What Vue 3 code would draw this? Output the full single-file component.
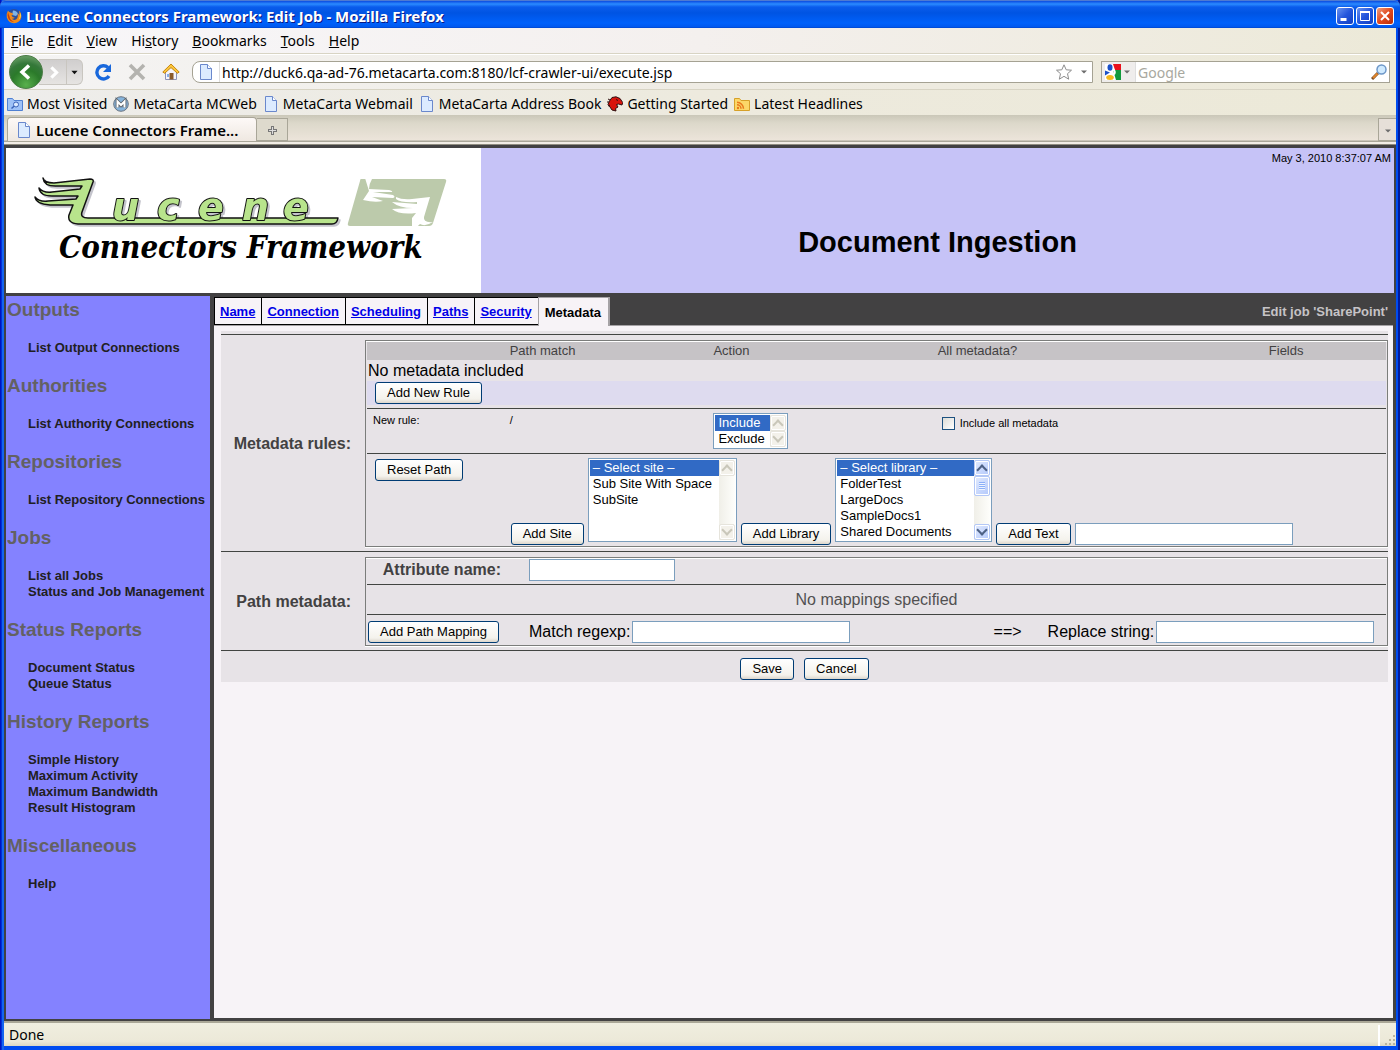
<template>
    <div class="window">
        <header class="title-bar">
            <svg class="icon" viewBox="0 0 16 16" aria-hidden="true">
                <circle cx="8" cy="8" r="7" fill="#2a4f9c" />
                <path d="M7 2.5q4 0 5 3.5l-2 2-4-1z" fill="#7fb4e8" />
                <path d="M2 2.500Q0 6 .8 9.500 2.500 15 8 15.300q6-.3 7.300-6Q15.600 5 13 2.600q1 3 .4 5-.8-2-2-2.600 1.200 4-1 6.200-2.500 1.600-4.600-.4 1.800.2 3-1-2.800-.4-3.300-2.600.8-.8 2-.7Q6.500 4.800 4.200 4.600 2.600 4 2 2.500z" fill="#f08a1c" />
                <path d="M2 4q-1 3 .2 6 1.600 4 6 4.200Q4 12 3.500 8.500 2.500 6 2 4z" fill="#c8400c" />
                <path d="M13.600 4.200q1.200 4-1 7.500 2-1 2.400-4 0-2-1.400-3.500z" fill="#fbd44a" />
            </svg>
            <h1>Lucene Connectors Framework: Edit Job - Mozilla Firefox</h1>
            <div class="window-buttons">
                <button type="button" aria-label="Minimize"><svg viewBox="0 0 14 14"><path d="M2.500 10.500h6" stroke="#fff" stroke-width="3" /></svg></button>
                <button type="button" aria-label="Maximize"><svg viewBox="0 0 14 14"><path d="M2.500 3v8.500h9V3z" stroke="#fff" fill="none" /><path d="M2 3h10" stroke="#fff" stroke-width="2" /></svg></button>
                <button type="button" class="close" aria-label="Close"><svg viewBox="0 0 14 14"><path d="M3 3l8 8M11 3l-8 8" stroke="#fff" stroke-width="2" /></svg></button>
            </div>
        </header>

        <nav class="menu-bar">
            <button v-for="item in menus" :key="item.key + item.post" type="button">{{ item.pre }}<u>{{ item.key }}</u>{{ item.post }}</button>
        </nav>

        <div class="toolbar">
            <div class="history">
                <button type="button" class="back" aria-label="Back"><svg viewBox="0 0 32 32"><path d="M19 9.500l-7 6.500 7 6.500" stroke="#fff" stroke-width="3.500" fill="none" /></svg></button>
                <button type="button" class="forward" aria-label="Forward"><svg viewBox="0 0 22 22"><path d="M8 6l5 5-5 5" stroke="#fff" stroke-width="3" fill="none" /></svg></button>
                <button type="button" class="recent" aria-label="Recent pages"><svg viewBox="0 0 8 8"><path d="M0.500 2h7L4 6z" fill="#111" /></svg></button>
            </div>
            <div class="tools">
                <button type="button" aria-label="Reload"><svg viewBox="0 0 18 18"><path d="M14 4.500A6.600 6.600 0 1 0 15 13" stroke="#1968dc" stroke-width="3.400" fill="none" /><path d="M9 9h8V1z" fill="#1968dc" /></svg></button>
                <button type="button" aria-label="Stop"><svg viewBox="0 0 18 18"><path d="M2 2l14 14M16 2L2 16" stroke="#b4b3af" stroke-width="3.600" /></svg></button>
                <button type="button" aria-label="Home">
                    <svg viewBox="0 0 18 18">
                        <path d="M3.500 8.500v8h11v-8L9 3.500z" fill="#f6f5fb" stroke="#8d93b8" />
                        <path d="M7.500 10h4v6.500h-4z" fill="#8a5a2a" /><path d="M5 11h2v3H5z" fill="#86aee8" />
                        <path d="M9 1L.8 9l1.800 1.300L9 4.600l6.400 5.700L17.200 9z" fill="#fbc63a" stroke="#c78612" />
                    </svg>
                </button>
            </div>
            <div class="field address">
                <span class="site-icon">
                    <svg class="icon" viewBox="0 0 16 16" aria-hidden="true"><path :d="pageShape" fill="#dcebff" stroke="#6a88cc" /><path d="M9.500 .5v4h4" fill="#fff" stroke="#6a88cc" /></svg>
                </span>
                <input type="text" aria-label="Location" v-model="url">
                <button type="button" aria-label="Bookmark this page"><svg class="icon" viewBox="0 0 16 16"><path d="M8 .8l2.200 5 5.300.4-4 3.500 1.200 5.500L8 12.300l-4.700 2.900 1.200-5.500-4-3.500 5.300-.4z" fill="#fff" stroke="#8d8d8d" /></svg></button>
                <button type="button" class="drop" aria-label="Show history"><svg viewBox="0 0 8 8"><path d="M1 2.500h6L4 5.500z" fill="#6d6d6d" /></svg></button>
            </div>
            <div class="field search">
                <button type="button" class="engine" aria-label="Search engine">
                    <svg class="icon" viewBox="0 0 16 16">
                        <path d="M0 0h16v16H0z" fill="#fff" /><path d="M8 0h8v6H10z" fill="#e8101c" /><path d="M8 6h8v10h-5z" fill="#109a3c" />
                        <ellipse cx="5" cy="3.500" rx="2.500" ry="3.300" fill="#1a50c8" /><path d="M0 6.500l5 2-5 3z" fill="#1a50c8" /><ellipse cx="5" cy="13.500" rx="3.800" ry="2.500" fill="#f5b81c" />
                        <path d="M8 5.500q3 2 1 5" stroke="#fff" stroke-width="2" fill="none" />
                    </svg>
                    <svg class="caret" viewBox="0 0 8 8"><path d="M1 2.500h6L4 5.500z" fill="#6d6d6d" /></svg>
                </button>
                <input type="text" aria-label="Search" placeholder="Google">
                <button type="button" aria-label="Go"><svg class="icon" viewBox="0 0 16 16"><path d="M1 15l6-6" stroke="#7a4a22" stroke-width="3" /><path d="M2 14l4.500-4.500" stroke="#e0862c" stroke-width="2" /><circle cx="10.500" cy="5.500" r="4.500" fill="#cfeaff" stroke="#6d97c8" stroke-width="1.500" /></svg></button>
            </div>
        </div>

        <nav class="bookmarks">
            <a v-for="mark in bookmarks" :key="mark.label" href="#">
                <svg v-if="mark.icon === 'folder'" class="icon" viewBox="0 0 16 16"><path d="M.5 14.500v-12h5l1.500 2h8.500v10z" fill="#9fc2f7" stroke="#4f80d2" /><circle cx="9" cy="8.500" r="2.500" fill="#dcebff" stroke="#3a62b8" /><path d="M4.500 12.500L7 10.300" stroke="#3a62b8" stroke-width="1.500" /></svg>
                <svg v-else-if="mark.icon === 'globe'" class="icon" viewBox="0 0 16 16"><circle cx="8" cy="8" r="7.300" fill="#86b4dc" stroke="#6a7480" /><path d="M4.500 11.500V5.500L8 9l3.500-3.500v6" fill="none" stroke="#596068" stroke-width="3.800" /><path d="M4.500 11.500V5.500L8 9l3.500-3.500v6" fill="none" stroke="#fff" stroke-width="2" /></svg>
                <svg v-else-if="mark.icon === 'page'" class="icon" viewBox="0 0 16 16"><path :d="pageShape" fill="#dcebff" stroke="#6a88cc" /><path d="M9.500 .5v4h4" fill="#fff" stroke="#6a88cc" /></svg>
                <svg v-else-if="mark.icon === 'dino'" class="icon" viewBox="0 0 16 16"><path d="M5 1.500L9 .8l4 1.700 2.700 4-.7 2.500-3.500-1-2 .5L11 11l-2.500 1.500.5 2.500-4-1L3 11 1 8.500 2.500 5z" fill="#d8130c" stroke="#301010" /><path d="M1 3l2 1M0 6h2M1 10l2-1M9 3.500l2 1" stroke="#301010" fill="none" /></svg>
                <svg v-else class="icon" viewBox="0 0 16 16"><path d="M.5 14.500v-12h5l1.500 2h8.500v10z" fill="#fbd768" stroke="#d6a028" /><circle cx="4" cy="12" r="1.200" fill="#e8791c" /><path d="M3 8.800a4 4 0 0 1 4 4M3 6.300a6.500 6.500 0 0 1 6.500 6.500" stroke="#e8791c" stroke-width="1.500" fill="none" /></svg>
                {{ mark.label }}
            </a>
        </nav>

        <div class="tab-strip">
            <button type="button" class="page-tab">
                <svg class="icon" viewBox="0 0 16 16"><path :d="pageShape" fill="#dcebff" stroke="#6a88cc" /><path d="M9.500 .5v4h4" fill="#fff" stroke="#6a88cc" /></svg>
                Lucene Connectors Frame...
            </button>
            <button type="button" class="new-tab" aria-label="New tab"><svg viewBox="0 0 9 9"><path d="M4.500 0v9M0 4.500h9" stroke="#777" stroke-width="3" /><path d="M4.500 1v7M1 4.500h7" stroke="#ddd" /></svg></button>
            <button type="button" class="all-tabs" aria-label="List all tabs"><svg viewBox="0 0 8 8"><path d="M1 2.500h6L4 5.500z" fill="#6d6d6d" /></svg></button>
        </div>

        <div class="page">
            <div class="banner">
                <div class="logo">
                    <svg viewBox="0 0 475 145" role="img" aria-label="Lucene Connectors Framework">
                        <g class="wordmark">
                            <path d="M37 30Q38 35 48 35L84 31Q88 31 87 34L76 64Q74 70 82 70H332Q331 76 326 76H72Q61 75 63 67L67 57H44Q30 56 29 49 33 54 42 53L70 51 72 48H46Q34 48 33 40 37 45 46 44L74 41 76 38H52Q38 39 37 30z" />
                            <text y="72"><tspan x="66" class="cap">L</tspan><tspan x="106 151 192 236 277">ucene</tspan></text>
                        </g>
                        <path d="M355 31h83q3 0 2 3l-13 41q-1 3-4 3h-79q-3 0-2-3l12-42q0-2 1-2z" fill="#bccaab" />
                        <path d="M359 30l7 1q-3 5-3 10l20 1q4 1 3 2h-19l20 3q3 2 0 3l-21-1 11 4q-8 2-20-1l6-9z" fill="#fff" />
                        <path d="M390 49q6 3 16 2l18-2-6 20q-1 6 9 5-8 5-13 2-4 5-8 2v-8l4-5q-17 2-24-4l21-1q-14 0-21-6l25 2v-2q-16 1-21-3z" fill="#fff" />
                        <text class="tagline" x="53" y="110">Connectors Framework</text>
                    </svg>
                </div>
                <div class="heading">
                    <p class="date">May 3, 2010 8:37:07 AM</p>
                    <h2>Document Ingestion</h2>
                </div>
            </div>

            <div class="body">
                <nav class="sidebar">
                    <section v-for="group in groups" :key="group.title">
                        <h3>{{ group.title }}</h3>
                        <ul>
                            <li v-for="link in group.links" :key="link"><a href="#">{{ link }}</a></li>
                        </ul>
                    </section>
                </nav>

                <main>
                    <div class="tabs">
                        <a v-for="tab in tabs" :key="tab" href="#" :class="{ active: tab === 'Metadata' }">{{ tab }}</a>
                        <span class="job-name">Edit job 'SharePoint'</span>
                    </div>

                    <form @submit.prevent>
                        <div class="form-row">
                            <div class="row-label">Metadata rules:</div>
                            <div class="box">
                                <table class="rules">
                                    <thead>
                                        <tr><th></th><th>Path match</th><th>Action</th><th>All metadata?</th><th>Fields</th></tr>
                                    </thead>
                                    <tbody>
                                        <tr class="empty"><td colspan="5">No metadata included</td></tr>
                                        <tr><td colspan="5" class="add-cell"><div class="add-rule"><button type="button" class="btn">Add New Rule</button></div></td></tr>
                                        <tr class="new-rule">
                                            <td class="indent">New rule:</td>
                                            <td>/</td>
                                            <td>
                                                <div class="list-box action">
                                                    <select size="2" aria-label="Action" v-model="action">
                                                        <option>Include</option>
                                                        <option>Exclude</option>
                                                    </select>
                                                    <span class="scroller off"><i class="arrow up"></i><i class="arrow down"></i></span>
                                                </div>
                                            </td>
                                            <td><label class="check"><input type="checkbox"> Include all metadata</label></td>
                                            <td></td>
                                        </tr>
                                        <tr class="path-row">
                                            <td class="reset"><button type="button" class="btn">Reset Path</button></td>
                                            <td colspan="4">
                                                <div class="path-tools">
                                                    <button type="button" class="btn">Add Site</button>
                                                    <div class="list-box site">
                                                        <select size="5" aria-label="Site" v-model="site">
                                                            <option v-for="s in sites" :key="s">{{ s }}</option>
                                                        </select>
                                                        <span class="scroller off"><i class="arrow up"></i><i class="arrow down"></i></span>
                                                    </div>
                                                    <button type="button" class="btn">Add Library</button>
                                                    <div class="list-box library">
                                                        <select size="5" aria-label="Library" v-model="library">
                                                            <option v-for="l in libraries" :key="l">{{ l }}</option>
                                                        </select>
                                                        <span class="scroller"><i class="arrow up"></i><i class="thumb"></i><i class="arrow down"></i></span>
                                                    </div>
                                                    <button type="button" class="btn">Add Text</button>
                                                    <input type="text" class="text wide" aria-label="Path text">
                                                </div>
                                            </td>
                                        </tr>
                                    </tbody>
                                </table>
                            </div>
                        </div>

                        <div class="form-row">
                            <div class="row-label">Path metadata:</div>
                            <div class="box">
                                <div class="map-row attribute">
                                    <label for="attribute">Attribute name:</label>
                                    <input id="attribute" type="text" class="text">
                                </div>
                                <div class="map-row none">No mappings specified</div>
                                <div class="map-row mapping">
                                    <div><button type="button" class="btn">Add Path Mapping</button></div>
                                    <div class="pair">
                                        <label for="match">Match regexp:</label>
                                        <input id="match" type="text" class="text wide">
                                    </div>
                                    <span>==&gt;</span>
                                    <div class="pair">
                                        <label for="replace">Replace string:</label>
                                        <input id="replace" type="text" class="text wide">
                                    </div>
                                </div>
                            </div>
                        </div>

                        <div class="form-actions">
                            <button type="submit" class="btn">Save</button>
                            <button type="button" class="btn">Cancel</button>
                        </div>
                    </form>
                </main>
            </div>
        </div>

        <footer class="status-bar">
            <span>Done</span>
            <svg viewBox="0 0 12 12" aria-hidden="true"><path d="M9 1h2v2H9zM5 5h2v2H5zM9 5h2v2H9zM1 9h2v2H1zM5 9h2v2H5zM9 9h2v2H9z" fill="#b8b49f" /></svg>
        </footer>
    </div>
</template>

<script setup>
import { ref } from "vue";

const pageShape = "M2.5 .5h7l4 4v11h-11z";

const url = ref("http://duck6.qa-ad-76.metacarta.com:8180/lcf-crawler-ui/execute.jsp");
const action = ref("Include");
const site = ref("– Select site –");
const library = ref("– Select library –");

const menus = [
    { pre: "", key: "F", post: "ile" },
    { pre: "", key: "E", post: "dit" },
    { pre: "", key: "V", post: "iew" },
    { pre: "Hi", key: "s", post: "tory" },
    { pre: "", key: "B", post: "ookmarks" },
    { pre: "", key: "T", post: "ools" },
    { pre: "", key: "H", post: "elp" },
];

const bookmarks = [
    { label: "Most Visited", icon: "folder" },
    { label: "MetaCarta MCWeb", icon: "globe" },
    { label: "MetaCarta Webmail", icon: "page" },
    { label: "MetaCarta Address Book", icon: "page" },
    { label: "Getting Started", icon: "dino" },
    { label: "Latest Headlines", icon: "feed" },
];

const groups = [
    { title: "Outputs", links: ["List Output Connections"] },
    { title: "Authorities", links: ["List Authority Connections"] },
    { title: "Repositories", links: ["List Repository Connections"] },
    { title: "Jobs", links: ["List all Jobs", "Status and Job Management"] },
    { title: "Status Reports", links: ["Document Status", "Queue Status"] },
    { title: "History Reports", links: ["Simple History", "Maximum Activity", "Maximum Bandwidth", "Result Histogram"] },
    { title: "Miscellaneous", links: ["Help"] },
];

const tabs = ["Name", "Connection", "Scheduling", "Paths", "Security", "Metadata"];

const sites = ["– Select site –", "Sub Site With Space", "SubSite"];
const libraries = ["– Select library –", "FolderTest", "LargeDocs", "SampleDocs1", "Shared Documents"];
</script>

<style>
body {
    margin: 0;
}
</style>

<style scoped>
* {
    box-sizing: border-box;
}

.window {
    min-height: 100vh;
    display: flex;
    flex-direction: column;
    padding: 0 4px 4px;
    background: linear-gradient(to right, #0013c0 0 1px, #0031d8 1px 2px, #1464f0 2px 4px, #004cf0 4px calc(100% - 2px), #001a9c calc(100% - 2px));
    font-family: "Noto Sans", "Open Sans", sans-serif;
    font-size: 14px;
    color: #000;
}

button {
    padding: 0;
    border: 0;
    background: none;
    font: inherit;
    color: inherit;
}

.icon {
    width: 16px;
    height: 16px;
    flex: none;
    display: block;
}

/* Title bar */
.title-bar {
    height: 28px;
    margin: 0 -4px;
    padding: 3px 6px 0;
    display: flex;
    align-items: center;
    gap: 4px;
    border-top: 1px solid #4f7ad0;
    border-radius: 6px 6px 0 0;
    background: linear-gradient(#0a4ae0, #2b8bff 3px, #0a5cec 6px, #0054e3 12px, #0061fb 22px, #0058ee 26px, #0040c4);
}

.title-bar h1 {
    flex: 1;
    margin: 0;
    font-size: 15px;
    line-height: 20px;
    font-weight: 700;
    color: #fff;
    text-shadow: 1px 1px #0a1883;
}

.window-buttons {
    display: flex;
    gap: 2px;
}

.window-buttons button {
    width: 18px;
    height: 18px;
    padding: 1px;
    border: 1px solid #fff;
    border-radius: 3px;
    background: linear-gradient(135deg, #6a94f0, #2355dc 50%, #1440c0);
}

.window-buttons .close {
    background: linear-gradient(135deg, #f0a080, #e0481c 50%, #b82c08);
}

.window-buttons svg {
    display: block;
}

/* Menus and toolbar */
.menu-bar {
    height: 26px;
    display: flex;
    align-items: center;
    gap: 14px;
    padding-left: 7px;
    border-bottom: 1px solid #d8d4c4;
    background: linear-gradient(to right, #f8f7fa, #f4f0ee 50%, #ece9d8);
}

.toolbar {
    height: 36px;
    display: flex;
    align-items: center;
    padding: 0 6px 0 5px;
    border-top: 1px solid #fff;
    border-bottom: 1px solid #d8d4c4;
    background: linear-gradient(to right, #f5f4f4, #efece4 50%, #ece9d8);
}

.history {
    display: flex;
    align-items: center;
    margin-right: 11px;
}

.history svg {
    display: block;
}

.back {
    width: 34px;
    height: 34px;
    margin-right: -4px;
    position: relative;
    border: 1px solid #4c7c46;
    border-radius: 50%;
    background: radial-gradient(circle at 50% 90%, #58b04c, #2b7a2a 45%, #35783a 65%, #82b27c);
}

.forward,
.recent {
    height: 26px;
    border: 1px solid #c9c6c0;
    border-left: 0;
    background: linear-gradient(#d0cece, #e6e4e2);
}

.forward {
    width: 28px;
    padding: 0 0 0 4px;
}

.recent {
    width: 16px;
    padding: 0 4px;
    border-radius: 0 6px 6px 0;
}

.tools {
    display: flex;
    gap: 16px;
    margin-right: 12px;
}

.tools button {
    width: 18px;
    height: 18px;
}

.tools svg {
    display: block;
}

.field {
    height: 22px;
    display: flex;
    align-items: center;
    border: 1px solid #a5a293;
    background: #fff;
}

.field input {
    flex: 1;
    min-width: 0;
    padding: 0;
    border: 0;
    background: none;
    font: inherit;
    outline: none;
}

.field input::placeholder {
    color: #a8a8a0;
    opacity: 1;
}

.address {
    flex: 1;
    border-radius: 8px 0 0 8px;
    margin-right: 8px;
}

.site-icon {
    height: 20px;
    padding: 2px 5px;
    margin-right: 2px;
    border-right: 1px solid #dedede;
}

.drop {
    width: 8px;
    height: 8px;
    margin: 0 4px 0 8px;
}

.drop svg {
    display: block;
}

.search {
    width: 289px;
    padding-right: 2px;
}

.engine {
    height: 20px;
    display: flex;
    align-items: center;
    gap: 2px;
    padding: 0 4px 0 3px;
    margin-right: 2px;
    border-right: 1px solid #dedede;
    background: #efedec;
}

.caret {
    width: 8px;
    height: 8px;
}

.bookmarks {
    height: 25px;
    display: flex;
    align-items: center;
    gap: 6px;
    padding: 2px 3px 0;
    background: linear-gradient(to right, #eeedeb, #edeade 50%, #ece9d8);
}

.bookmarks a {
    display: flex;
    align-items: center;
    gap: 4px;
    color: #000;
    text-decoration: none;
    white-space: nowrap;
}

.tab-strip {
    height: 30px;
    display: flex;
    align-items: flex-end;
    padding: 0 0 3px 3px;
    border-bottom: 1px solid #8f8c80;
    background: linear-gradient(#cac7b8, #dcd8ca 8px, #ece4da 25px, #a9a698 26px 27px, #f2ede6 27px);
}

.page-tab {
    width: 250px;
    height: 24px;
    display: flex;
    align-items: center;
    gap: 4px;
    padding: 1px 8px 0;
    border: 1px solid #a9a698;
    border-bottom: 0;
    border-radius: 4px 4px 0 0;
    background: linear-gradient(#fdf9f7, #efe8e1);
    font-size: 15px;
    font-weight: 600;
    white-space: nowrap;
}

.new-tab {
    width: 31px;
    height: 23px;
    border: 1px solid #a9a698;
    border-left: 0;
    background: #dedacd;
}

.new-tab svg {
    width: 9px;
    height: 9px;
}

.all-tabs {
    width: 18px;
    height: 23px;
    margin-left: auto;
    border: 1px solid #a9a698;
    border-right: 0;
    background: #e6dfd8;
}

.all-tabs svg {
    width: 8px;
    height: 8px;
}

/* Web page */
.page {
    flex: 1;
    display: flex;
    flex-direction: column;
    gap: 3px;
    padding: 3px 2px 2px;
    background: #424142;
    font-family: "Liberation Sans", Arial, sans-serif;
    font-size: 16px;
}

.banner {
    display: flex;
    height: 145px;
}

.logo {
    width: 475px;
    background: #fff;
}

.logo svg {
    display: block;
}

.wordmark {
    fill: #b8e48c;
    stroke: #111;
    stroke-width: 1.5;
    stroke-linejoin: round;
    filter: drop-shadow(2px 2px 0 #c4c4cc);
}

.wordmark text {
    font-family: "DejaVu Sans", sans-serif;
    font-style: italic;
    font-weight: 700;
    font-size: 38px;
    paint-order: stroke;
    stroke-width: 2;
}

.wordmark .cap {
    font-size: 20px;
    font-weight: 400;
    stroke: none;
}

.logo .tagline {
    font-family: "DejaVu Serif Condensed", "DejaVu Serif", serif;
    font-style: italic;
    font-weight: 700;
    font-size: 31px;
}

.heading {
    flex: 1;
    background: #c6c3f7;
    text-align: center;
}

.date {
    margin: 0;
    padding: 3px 3px 0 0;
    font-size: 11px;
    line-height: 14px;
    text-align: right;
}

.heading h2 {
    margin: 60px 0 0;
    font-size: 29px;
    line-height: 34px;
}

.body {
    flex: 1;
    display: flex;
    gap: 4px;
}

.sidebar {
    width: 204px;
    flex: none;
    padding: 3px 0 0 1px;
    background: #8482ff;
    white-space: nowrap;
}

.sidebar h3 {
    margin: 0;
    font-size: 19px;
    line-height: 22px;
    color: #636163;
}

.sidebar ul {
    margin: 19px 0;
    padding: 0 0 0 21px;
    list-style: none;
}

.sidebar li {
    font-size: 13px;
    line-height: 16px;
    font-weight: 700;
}

.sidebar a {
    color: #212021;
    text-decoration: none;
}

main {
    flex: 1;
    min-width: 0;
    margin: 0 1px 1px 0;
    background: #f7f3f7;
}

.tabs {
    display: flex;
    align-items: stretch;
    height: 30px;
    padding-top: 1px;
    border-bottom: 1px solid #a5a2a5;
    background: #424142;
    font-size: 13px;
    line-height: 16px;
    font-weight: 700;
}

.tabs a {
    padding: 6px 6px 6px 5px;
    border: 1px solid #000;
    border-right: 0;
    background: #f7f3f7;
    color: #0000e7;
}

.tabs .active {
    margin-bottom: -1px;
    padding: 7px 7px 7px 6px;
    border: 1px solid #a5a2a5;
    border-width: 1px 2px 0 1px;
    color: #000;
    text-decoration: none;
}

.job-name {
    margin-left: auto;
    padding: 7px 5px 0 0;
    color: #c6c3c6;
}

form {
    margin: 5px 5px 0 7px;
    padding-top: 3px;
    background: #e7e3e7;
}

.form-row,
.form-actions {
    border-top: 1px solid #424542;
}

.form-row {
    display: grid;
    grid-template-columns: 144px 1fr;
    padding: 5px 0 4px;
}

.row-label {
    align-self: center;
    padding-right: 14px;
    color: #424142;
    font-weight: 700;
    text-align: right;
}

.box {
    padding: 1px;
    border: 1px solid #7b7d7b;
    box-shadow: inset 0 1px #fff, 0 1px #fff;
}

.rules {
    width: 100%;
    table-layout: fixed;
    border-collapse: collapse;
}

.rules th,
.rules td {
    padding: 0;
    text-align: left;
}

.rules th {
    background: #c6c3c6;
    color: #424142;
    font-size: 13px;
    line-height: 18px;
    font-weight: 400;
}

.rules th:nth-child(1) {
    width: 14%;
}

.rules th:nth-child(2) {
    width: 20%;
}

.rules th:nth-child(3) {
    width: 22%;
}

.rules th:nth-child(4) {
    width: 32.5%;
}

.rules .empty td {
    padding-left: 1px;
    line-height: 21px;
}

.rules .add-cell {
    padding-bottom: 3px;
}

.add-rule {
    padding: 1px 8px;
    background: #dedbef;
}

.new-rule,
.path-row {
    border-top: 1px solid #424542;
    vertical-align: top;
}

.new-rule td {
    height: 45px;
    padding-top: 4px;
    font-size: 11px;
    line-height: 14px;
}

.rules .indent {
    padding-left: 6px;
}

.rules .reset {
    padding: 5px 0 0 8px;
}

.btn {
    height: 22px;
    padding: 0 11px;
    border: 1px solid #003c74;
    border-radius: 3px;
    background: linear-gradient(#fff, #f4f2ec 80%, #dcd6cc);
    font-family: "Liberation Sans", Arial, sans-serif;
    font-size: 13px;
    line-height: 20px;
    white-space: nowrap;
    display: block;
}

.list-box {
    display: inline-flex;
    padding: 1px;
    border: 1px solid #7b9ebd;
    background: #fff;
}

.list-box select {
    flex: 1;
    height: 80px;
    padding: 0;
    border: 0;
    border-radius: 0;
    outline: none;
    overflow: hidden;
    scrollbar-width: none;
    background: #fff;
    font-family: "Liberation Sans", Arial, sans-serif;
    font-size: 13px;
}

.action select {
    height: 32px;
}

.list-box option {
    height: 16px;
    min-height: 16px;
    padding: 0 3px;
    line-height: 16px;
    color: #000;
}

.list-box option:checked {
    background: #316ac5 linear-gradient(#316ac5, #316ac5);
    color: #fff;
}

.action {
    width: 75px;
}

.site {
    width: 149px;
}

.library {
    width: 157px;
}

.scroller {
    width: 16px;
    display: flex;
    flex-direction: column;
    background: linear-gradient(to right, #f0efe8, #fefefb);
}

.arrow,
.thumb {
    height: 16px;
    flex: none;
    display: flex;
    align-items: center;
    justify-content: center;
    border: 1px solid #b4c8f6;
    border-radius: 2px;
    background: linear-gradient(135deg, #e1eafe, #b4c9fb);
    box-shadow: inset 0 0 0 1px #fff;
    color: #4d6185;
}

.arrow::before {
    content: "";
    width: 6px;
    height: 6px;
    border: solid currentColor;
    border-width: 2px 0 0 2px;
    transform: translateY(2px) rotate(45deg);
}

.down::before {
    transform: translateY(-2px) rotate(225deg);
}

.down {
    margin-top: auto;
}

.thumb {
    height: 20px;
}

.thumb::before {
    content: "";
    width: 6px;
    height: 8px;
    background: repeating-linear-gradient(#8cb0f8 0 1px, #eef4fe 1px 2px);
}

.off .arrow {
    border-color: #e6e4dc;
    background: #f3f1ea;
    color: #c9c7ba;
}

.check {
    display: flex;
    align-items: center;
    padding-top: 3px;
}

.check input {
    appearance: none;
    width: 13px;
    height: 13px;
    margin: 0 5px 0 4px;
    border: 1px solid #1c5180;
    background: linear-gradient(135deg, #dcdcd7, #fff);
}

.path-tools {
    display: flex;
    align-items: flex-end;
    gap: 4px;
    padding: 4px 0 0 1px;
}

.path-tools .list-box {
    margin-bottom: 3px;
}

.text {
    width: 146px;
    height: 22px;
    padding: 1px 3px;
    border: 1px solid #7b9ebd;
    background: #fff;
    font-family: "Liberation Sans", Arial, sans-serif;
    font-size: 13px;
}

.wide {
    width: 218px;
}

/* Path mappings */
.map-row {
    padding: 0 1px 3px;
    border-bottom: 1px solid #424542;
}

.attribute {
    display: grid;
    grid-template-columns: 161px 1fr;
    align-items: center;
}

.attribute label {
    padding-right: 28px;
    color: #424142;
    font-weight: 700;
    text-align: right;
}

.none {
    padding: 4px 0;
    line-height: 21px;
    color: #525152;
    text-align: center;
}

.mapping {
    display: grid;
    grid-template-columns: 161px 13fr 80px 10fr;
    align-items: center;
    padding: 6px 1px 1px;
    border-bottom: 0;
}

.mapping > span {
    text-align: center;
}

.pair {
    display: flex;
    align-items: center;
    gap: 2px;
    white-space: nowrap;
}

.form-actions {
    display: flex;
    justify-content: center;
    gap: 10px;
    padding: 7px 0 2px;
}

.status-bar {
    height: 25px;
    display: flex;
    align-items: center;
    justify-content: space-between;
    padding: 0 0 0 5px;
    border-top: 2px solid #aaa797;
    background: linear-gradient(#f0eee0, #ece9d8 80%, #dcd8c4);
}

.status-bar svg {
    width: 12px;
    height: 12px;
    align-self: flex-end;
    box-sizing: content-box;
    padding-left: 4px;
    padding-top: 9px;
    border-left: 2px solid #fff;
}
</style>
